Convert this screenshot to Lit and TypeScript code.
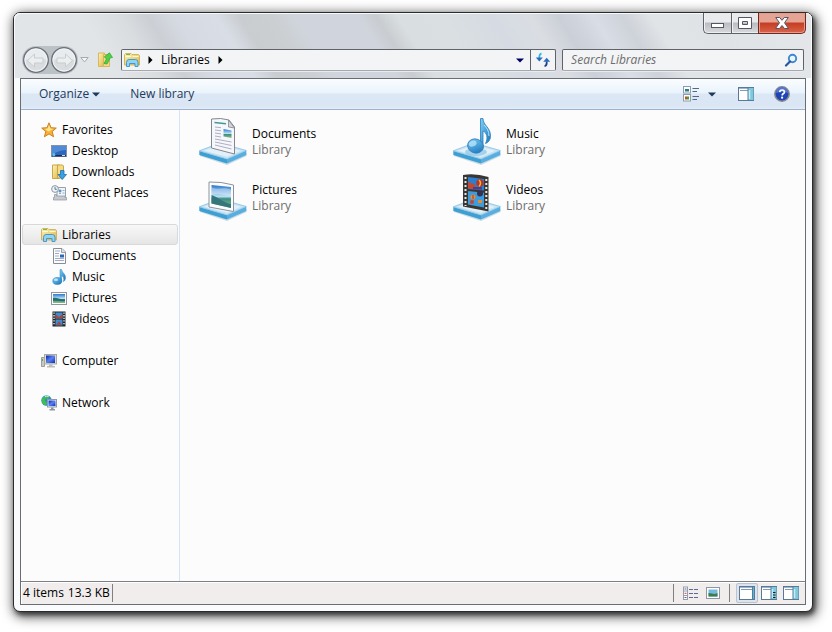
import { LitElement, html, css, svg } from "lit";
import { customElement } from "lit/decorators.js";

const box = (n: number, body: unknown) =>
  html`<svg width=${n} height=${n} viewBox="0 0 ${n} ${n}" aria-hidden="true">${body}</svg>`;

/* Blue shelf on which every large library icon stands. */
const shelf = svg`
  <path d="M1 39 28 48 47.500 39 47.500 36 28 44 1 34z" fill="#a9c4d6" opacity=".6"/>
  <path d="M.3 34v4L28 46.500V42z" fill="#3f9fd2"/>
  <path d="M28 42v4.500L47.300 38v-4.500z" fill="#58aedf"/>
  <path d="M.3 33.800 21 26l26.300 7.500L28 42z" fill="#c6e2f3" stroke="#84c2e6" stroke-width=".8"/>
  <path d="M5 33.800 21 28l21 5.700L28 39.700z" fill="#e4f0f8"/>`;

const gradients = svg`
  <defs>
    <linearGradient id="sky" x1="0" y1="0" x2="0" y2="1">
      <stop offset="0" stop-color="#2d78cf"/><stop offset=".5" stop-color="#b9e0f2"/>
      <stop offset=".6" stop-color="#3d8c86"/><stop offset="1" stop-color="#8fc07c"/>
    </linearGradient>
    <linearGradient id="blue" x1="0" y1="0" x2="1" y2="1">
      <stop offset="0" stop-color="#7fd0f7"/><stop offset="1" stop-color="#1470b8"/>
    </linearGradient>
    <linearGradient id="gold" x1="0" y1="0" x2="1" y2="1">
      <stop offset="0" stop-color="#fdf3b4"/><stop offset="1" stop-color="#dfb646"/>
    </linearGradient>
    <linearGradient id="screen" x1="0" y1="0" x2="1" y2="1">
      <stop offset="0" stop-color="#0a1fa8"/><stop offset=".5" stop-color="#5a82f0"/>
      <stop offset="1" stop-color="#0c2bc0"/>
    </linearGradient>
  </defs>`;

const bigDocument = box(48, svg`${gradients}${shelf}
  <path d="M12.500 2 Q22 .5 30 3L35.500 10V37L12.500 31z" fill="#f6f7fb" stroke="#85878f"/>
  <path d="M29.500 3v7l6 1z" fill="#d2d5dd" stroke="#85878f" stroke-width=".8"/>
  <path d="M15.500 5.500 27 6.700" stroke="#3f9a94" stroke-width="1.600"/>
  <path d="M24.500 12 32.500 13.500v7.500L24.500 19.500z" fill="url(#sky)"/>
  <path d="M16 10l6 .7M16 13l6 .8M16 16l6 .9M16 19l6 1M16 22l16.500 3M16 25l16.500 3.500M16 28l16.500 4" stroke="#a5a5be" stroke-width=".9"/>`);

const bigPicture = box(48, svg`${gradients}${shelf}
  <path d="M10 9 Q22 8.500 34.500 12v26.500L10 34z" fill="#fbfcfd" stroke="#8d939b"/>
  <path d="M12.500 12 32 14v21L12.500 30.500z" fill="url(#sky)"/>
  <path d="M12.500 14c5 4 12-1 19.500 3v6c-7 0-13-4-19.500-1z" fill="#fff" opacity=".35"/>
  <path d="M12.500 22c6 2 13 8 19.500 9v4L12.500 30.500z" fill="#35767a"/>`);

const bigMusic = box(48, svg`${gradients}${shelf}
  <ellipse cx="23" cy="35" rx="11" ry="4" fill="#8cc3e2" opacity=".7"/>
  <path d="M27.500 1.500h2.500c0 7 8 9 7.500 18 0 3-2 6-5 7 3-6 1-11-2.500-12.500v17.500H27.500z" fill="url(#blue)" stroke="#2a80bd" stroke-width=".8"/>
  <path d="M31 8c3 3 5 6 5 11" fill="none" stroke="#b9e4fa"/>
  <ellipse cx="22.500" cy="29" rx="8" ry="7" transform="rotate(20 22.500 29)" fill="url(#blue)" stroke="#2a80bd" stroke-width=".8"/>
  <ellipse cx="19.500" cy="26.500" rx="4" ry="2.800" transform="rotate(-20 20 26)" fill="#c6ebfb" opacity=".7"/>`);

const bigVideo = box(48, svg`${gradients}${shelf}
  <path d="M10 2 Q22 0 35.500 4v34.500L10 33.500z" fill="#3a3733"/>
  <path d="M15 4 31 6v11.500L15 16z" fill="#2c7fd0"/>
  <path d="M15 18 31 19.800v14.700L15 31.500z" fill="#3d9be0"/>
  <path d="M15 9 22 11.500v4.800l-7-.7z" fill="#c8482f"/><circle cx="27" cy="10" r="3.700" fill="#b83427"/>
  <path d="M26 7q3 3 0 6.500" fill="none" stroke="#f0b437" stroke-width="1.500"/>
  <path d="M20 14h9v2.500h-9z" fill="#553b80"/>
  <circle cx="27" cy="20.500" r="3" fill="#34324f"/><circle cx="20" cy="24" r="2.500" fill="#f08d25"/><path d="M20 22v4" stroke="#b52f2a"/>
  <circle cx="19" cy="29" r="2" fill="#c54432"/><path d="M25 27h4v3h-4z" fill="#e58e2c"/>
  <path d="M12.500 4v29" stroke="#dfe8ee" stroke-width="2" stroke-dasharray="2 2"/>
  <path d="M33.300 6v31" stroke="#dfe8ee" stroke-width="2" stroke-dasharray="2 2"/>`);

const star = box(16, svg`${gradients}
  <path d="M8 .8 10 5.700l5.300.4-4.100 3.400 1.400 5.300L8 11.900l-4.600 2.900 1.400-5.300L.7 6.100 6 5.700z" fill="#f9b233" stroke="#c9812b" stroke-linejoin="round"/>
  <path d="M8 3 9.300 6.600l3 .4-5 2.500L4 7l2.700-.4z" fill="#ffe78f"/>`);

const desktop = box(16, svg`${gradients}
  <rect x=".5" y="2.500" width="15" height="11" fill="#2b66bf" stroke="#7d93ad"/>
  <path d="M1 3h14v4C9 7 5 10 1 11z" fill="#639ade" opacity=".7"/>
  <path d="M1 12h14v1.500H1z" fill="#1b2d4e"/><circle cx="2.800" cy="11.700" r="1.600" fill="#5cc0e8"/><path d="M11 12.500h3" stroke="#d9e5f2"/>`);

const folder = box(16, svg`${gradients}
  <path d="M1.500 1h7v13.500h-7z" fill="url(#gold)" stroke="#c9a54b"/>
  <path d="M6.500 1h5l1 1v12h-6z" fill="#f5dc83" stroke="#c9a54b"/>
  <path d="M9.500 6.500h3.500v4h2.500L11.200 15.500 7 10.500h2.500z" fill="#38a0e4" stroke="#1b6db0" stroke-width=".8"/>`);

const recent = box(16, svg`${gradients}
  <path d="M6 2.500h8.500v9H6z" fill="#f2f4f6" stroke="#96a1aa"/>
  <path d="M8 5h2v2H8zM8 8.500h2M11.500 5.500h2M11.500 8h2" fill="#3c8bd0" stroke="#6f9cc4" stroke-width=".8"/>
  <circle cx="4" cy="4" r="3.400" fill="#edf3f7" stroke="#8b98a4"/><path d="M4 2v2.300h1.800" fill="none" stroke="#4d5d6c" stroke-width=".8"/>
  <path d="M3.500 9.500v3h-1v2.500h13v-2.500h-1.500v-1.500H5.500v-1.500z" fill="#c6cbd0" stroke="#8c949c" stroke-width=".7"/>`);

const library = box(16, svg`${gradients}
  <path d="M.5 13V2.500L1.500 1.500h5.500l1 1h6.500l1 1V13z" fill="url(#gold)" stroke="#cfb05a" stroke-width=".9"/>
  <path d="M1.500 4.500h5.500M8.500 4.500H14.500" stroke="#fff8d6"/><path d="M2 2.500h4" stroke="#76b84a"/>
  <path d="M2.500 14.500V10.500Q2.500 7.500 5 7.500h6.500q2.500 0 2.500 3v4h-3V11.500H5.500v3z" fill="#8fd4f5" stroke="#3b92c8" stroke-width=".9"/>`);

const doc = box(16, svg`${gradients}
  <path d="M2.500.5H11L14.500 4v11.500h-12z" fill="#fbfbfd" stroke="#8b8d93"/><path d="M10.500.5v4h4" fill="#dcdfe5" stroke="#8b8d93" stroke-width=".8"/>
  <path d="M4 3h5M4 5.500h4M4 8h4M4 10.500h9M4 12.500h9" stroke="#93a3c2" stroke-width=".9"/><path d="M9 6.500h4v3H9z" fill="#2b6ab5"/>`);

const note = box(16, svg`${gradients}
  <path d="M9 .5h1.500C11 4 15 5 14.500 9c-.2 2-1 3-2 3.500.8-3 0-5-2-6v6H9z" fill="url(#blue)" stroke="#2a80bd" stroke-width=".5"/>
  <ellipse cx="6.300" cy="12" rx="4.500" ry="3.500" fill="url(#blue)" stroke="#2a80bd" stroke-width=".6"/><ellipse cx="5" cy="10.800" rx="2" ry="1.200" fill="#b8e6fb"/>`);

const picture = box(16, svg`${gradients}
  <rect x=".5" y="2.500" width="15" height="12" fill="#fff" stroke="#8f969d"/><path d="M2 4h12v9H2z" fill="url(#sky)"/>
  <path d="M2 8c4-1 7 2 12 1v2c-4 1-8-1-12 0z" fill="#276f77"/>`);

const film = box(16, svg`${gradients}
  <path d="M1.500.5h13v15h-13z" fill="#22262b"/><path d="M4.500 1.500h7v6h-7zM4.500 8.500h7v6h-7z" fill="#3c8ed6"/>
  <path d="M4.500 3 8 6l3.500-3v4.500h-7zM5 14l3-4 3 4z" fill="#a64a3c"/>
  <path d="M3 1.500v13M13 1.500v13" stroke="#e2eaf0" stroke-width="1.400" stroke-dasharray="1.300 1.300"/>`);

const computer = box(16, svg`${gradients}
  <path d="M.5 4.500h3v9h-3z" fill="#c9c9c4" stroke="#8b8b86" stroke-width=".8"/><path d="M1.500 6v2" stroke="#55b13c"/>
  <rect x="3.500" y="1.500" width="12" height="9.500" fill="#dcdcd7" stroke="#a9a9a2"/><rect x="5" y="2.500" width="9" height="7.500" fill="url(#screen)"/>
  <path d="M8 11.500h3.500v1.500H14v1.500H6V13h2z" fill="#bdbdb8"/>`);

const network = box(16, svg`${gradients}
  <circle cx="5.500" cy="5.500" r="5.200" fill="#2f86dc"/><path d="M1 3.500c2-3 6-3 8-2L7 4 4.500 3.500 4 6l2 2-1 2.500C2 10 0 7 1 3.500z" fill="#3fc04a"/>
  <path d="M4 1.500q2-.8 3.500 0" stroke="#d6f2ff" fill="none"/>
  <rect x="6.500" y="4.500" width="9" height="7.500" fill="#eef2f6" stroke="#8f9aa8"/><rect x="7.500" y="5.500" width="7" height="5.500" fill="url(#screen)"/>
  <path d="M10 12.500h2.500V14H14v1.500H8.500V14H10z" fill="#8d97a3"/>`);

const upFolder = box(16, svg`${gradients}
  <path d="M1.500 1h6v13.500h-6z" fill="url(#gold)" stroke="#d8b75c"/><path d="M6.500 2.500h6v12h-6z" fill="#f3d98a" stroke="#d8b75c"/>
  <path d="M7 11.500 9.500 7 7.300 4.800 12.500.8 15.500 5.500l-2.200.3L10 12z" fill="#4fd048" stroke="#2da32d" stroke-width=".7" stroke-linejoin="round"/>`);

const roundArrow = (dir: number) => html`<svg width="28" height="28" viewBox="0 0 28 28" aria-hidden="true">
  <circle cx="14" cy="14" r="12.300" fill="#d9dde0" stroke="#69707a" stroke-width="1.300"/>
  <path d="M3 14a11 11 0 0 1 22 0q-11-4-22 0z" fill="#e9ecee"/>
  <circle cx="14" cy="14" r="11" fill="none" stroke="#f3f5f6"/>
  ${dir < 0
    ? svg`<path d="M5.500 14.500 12.500 8v4h8.500v5h-8.500v4z" fill="#eceef0" stroke="#c8cdd1"/>`
    : svg`<path d="M22.500 14.500 15.500 8v4H7v5h8.500v4z" fill="#eceef0" stroke="#c8cdd1"/>`}
</svg>`;

const refresh = box(16, svg`
  <path d="M6.500 1.500Q4 2 4.300 7" fill="none" stroke="#35b5e6" stroke-width="1.800"/><path d="M.8 5.500h7L4.300 9.500z" fill="#2a6dbf"/>
  <path d="M9.500 14.200q2.500-.5 2.200-5" fill="none" stroke="#1d3f8a" stroke-width="1.800"/><path d="M8.200 9.800h7L11.700 5.800z" fill="#2a6dbf"/>`);

const magnifier = box(14, svg`
  <circle cx="8.500" cy="5.500" r="3.700" fill="#e9f5fc" stroke="#3f88d0" stroke-width="1.900"/>
  <path d="M6 8.500 2 12.500" stroke="#2456a6" stroke-width="2.200" stroke-linecap="round"/>`);

const down = html`<svg width="8" height="5" viewBox="0 0 8 5" aria-hidden="true"><path d="M0 .5h8L4 4.500z" fill="currentColor"/></svg>`;
const crumbArrow = html`<svg width="5" height="8" viewBox="0 0 5 8" aria-hidden="true"><path d="M.5 0v8L4.500 4z" fill="#000"/></svg>`;

const viewIcon = box(16, svg`
  <rect x=".5" y=".5" width="7" height="6.500" fill="#fff" stroke="#8f9cad"/><rect x=".5" y="8.500" width="7" height="6.500" fill="#fff" stroke="#8f9cad"/>
  <path d="M2 3h4v2.500H2z" fill="#267e87"/><path d="M2 10.500h2v3H2z" fill="#b85424"/><path d="M4 10.500h2v3H4z" fill="#4f9c33"/>
  <path d="M9.500 2.500H16M9.500 5.500H14M9.500 10.500H16M9.500 13.500H14" stroke="#516785"/>`);

const panel = (fill: boolean, lines = false) => box(16, svg`
  <rect x=".5" y="1.500" width="15" height="13" fill="#fff" stroke="#587999"/>
  <path d="M1 2.500h14" stroke="#9db4ca"/>
  <path d="M2 4.500h8" stroke="#7e9ab8"/>
  ${fill ? svg`<path d="M10 2h5.500v12H10z" fill="#7cc9dd"/><path d="M10 2v12.500" stroke="#587999"/><path d="M11.500 4v9" stroke="#c5ecf5" stroke-width="1.500"/>`
    : svg`<path d="M2 4.500h11" stroke="#7e9ab8"/><path d="M13.500 2v12" stroke="#587999"/><path d="M14.500 2v12" stroke="#5fb6d3"/>`}
  ${lines ? svg`<path d="M12 7.500h2.500M12 10h2.500M12 12.500h2.500" stroke="#101c24" stroke-width="1.200"/>` : ""}`);

const help = html`<svg width="16" height="16" viewBox="0 0 16 16" aria-hidden="true">
  <circle cx="8" cy="8" r="7.200" fill="#1f44b4" stroke="#84888f" stroke-width="1.500"/>
  <path d="M2 7a6 6 0 0 1 12 0q-6-2-12 0z" fill="#5474d0"/>
  <path d="M5.700 6.200q.2-2.200 2.400-2.200t2.300 1.900q0 1.200-1.300 1.900-.9.600-.9 1.600" fill="none" stroke="#fff" stroke-width="1.700"/>
  <circle cx="8.100" cy="11.700" r="1.100" fill="#fff"/></svg>`;

const listIcon = box(16, svg`
  <rect x=".5" y="2" width="4" height="12.500" fill="#fff" stroke="#9a9da6"/>
  <path d="M.5 6H4.500M.5 10.500H4.500" stroke="#9a9da6"/><path d="M1.500 4h2" stroke="#3d68bb"/><path d="M1.500 8.300h2" stroke="#c03c34"/><path d="M1.500 12.500h2" stroke="#3d68bb"/>
  <path d="M6 4.500h4M11 4.500h4M6 8.500h4M11 8.500h4M6 12.500h4M11 12.500h4" stroke="#5b6a96"/>`);

const tree = [
  { name: "Favorites", icon: star, items: [["Desktop", desktop], ["Downloads", folder], ["Recent Places", recent]] },
  { name: "Libraries", icon: library, selected: true, items: [["Documents", doc], ["Music", note], ["Pictures", picture], ["Videos", film]] },
  { name: "Computer", icon: computer, items: [] },
  { name: "Network", icon: network, items: [] },
] as { name: string; icon: unknown; selected?: boolean; items: [string, unknown][] }[];

const libraries = [["Documents", bigDocument], ["Music", bigMusic], ["Pictures", bigPicture], ["Videos", bigVideo]] as [string, unknown][];

@customElement("app-root")
export class AppRoot extends LitElement {
  static styles = css`
    :host { display: flex; min-height: 100vh; box-sizing: border-box; padding: 12px 19px 20px 13px; background: #fff;
      font: 12px/16px "Open Sans", "Noto Sans", sans-serif; color: #000; }
    * { box-sizing: border-box; }
    svg { display: block; flex: none; }
    button, input { font: inherit; color: inherit; background: none; border: 0; padding: 0; margin: 0; }
    button { display: flex; align-items: center; justify-content: center; }
    a { color: inherit; text-decoration: none; }
    .window { flex: 1; min-width: 0; display: flex; flex-direction: column; border: 1px solid #2b2b2b; border-radius: 7px;
      background: #fafbfc; box-shadow: 2px 3px 4px rgba(0,0,0,.5), 2px 3px 12px 2px rgba(0,0,0,.65); padding-bottom: 6px; }
    .title { border-radius: 6px 6px 0 0; box-shadow: inset 1px 1px 0 #f8f9fa, inset -1px 0 0 #f8f9fa; padding-bottom: 4px;
      background: linear-gradient(58deg, #e2e5e8 0, #e2e5e8 90px, #d9dde0 123px, #ccd0d5 146px, #d6dae2 170px, #d9dde5 204px, #d0d4da 216px,
        #c9cdd0 224px, #cbcfd2 250px, #d0d5dd 272px, #d0d4dc 325px, #c9cdd1 340px, #d9dee0 358px, #dadfe2 395px, #d6dbe3 437px, #dadee3 471px,
        #cbcfd7 494px, #d0d4dc 508px, #d9dde5 524px, #ced2d9 548px, #e0e4e7 573px, #dfe3e6 620px, #e4e6ea 700px); }
    .caption { display: flex; justify-content: flex-end; padding-right: 6px; }
    .cap { height: 21px; width: 28px; border: 1px solid #5e6268; border-top: 0; border-right: 0; box-shadow: inset 1px 0 #f0f1f2, inset 0 -1px #eceef0;
      background: linear-gradient(#e9eaec 0 9px, #b9bcc1 10px, #d8dadd); }
    .cap.min { border-radius: 0 0 0 5px; }
    .cap.max { width: 27px; }
    .cap.close { width: 48px; border-right: 1px solid #6e2a22; border-color: #6e2a22; border-radius: 0 0 5px 0; box-shadow: inset 0 0 0 1px #eb9a88;
      background: linear-gradient(#e6a594 0 9px, #c53c22 10px, #d9644b); }
    .nav { display: flex; align-items: center; height: 28px; margin-top: 12px; padding: 0 8px; }
    .travel { display: flex; background: #bcc1c6; border-radius: 14px; margin-right: 2px; }
    .recent { width: 9px; }
    .up { margin: 0 8px; }
    .field { height: 22px; min-width: 0; display: flex; align-items: center; border: 1px solid #5f6368; border-bottom-color: #a6a9ad;
      border-radius: 2px; background: #f3f4f5; box-shadow: 0 1px #e9ebee; }
    .address { flex: 19 1 0; gap: 8px; padding-left: 2px; margin-right: 6px; }
    .drop { margin-left: auto; width: 20px; height: 20px; color: #000060; margin-right: -8px; }
    .refresh { width: 25px; height: 20px; border-left: 1px solid #5f6368; }
    .search { flex: 10 1 0; padding: 0 5px 0 8px; }
    .search input { flex: 1; min-width: 0; outline: 0; }
    .search input::placeholder { color: #6d6d6d; font-style: italic; opacity: 1; }
    .client { flex: 1; display: flex; flex-direction: column; margin: 0 6px; border: 1px solid #6a6e73; background: #fcfcfc; }
    .tools { display: flex; align-items: center; height: 31px; padding: 0 15px 0 18px; color: #1e395b; border-bottom: 1px solid #a0b3cc;
      background: linear-gradient(#fbfdff 0, #e9f3fc 14px, #dce7f5 15px, #dae6f4 27px, #e4edf8); }
    .organize { gap: 3px; margin-right: 30px; }
    .view { margin-left: auto; gap: 9px; margin-right: 22px; }
    .preview { margin-right: 20px; }
    .body { flex: 1; display: flex; }
    .side { width: 159px; flex: none; border-right: 1px solid #d6e5f5; padding: 9px 1px 0 1px; }
    .group { margin-bottom: 21px; }
    .row { display: flex; align-items: center; gap: 5px; height: 21px; padding-left: 18px; border: 1px solid transparent; border-radius: 3px; }
    .child { padding-left: 28px; }
    .selected { border-color: #d9d9d9; background: linear-gradient(#f8f8f8, #e5e5e5); }
    .main { flex: 1; display: grid; grid-template-columns: repeat(auto-fill, 246px); grid-auto-rows: 48px; gap: 8px; padding: 7px 19px; align-content: start; }
    .tile { display: flex; align-items: center; gap: 5px; }
    .label { padding-top: 2px; }
    .kind { color: #6d6d6d; }
    .status { display: flex; align-items: center; height: 23px; border-top: 1px solid #7d8084; background: #f0edec; box-shadow: inset 1px 1px #fff;
      padding: 0 3px 0 2px; }
    .count { display: flex; gap: 4px; }
    .rule { width: 1px; height: 18px; background: #808080; margin-left: 2px; }
    .rule.first { margin-left: auto; }
    .modes { display: flex; align-items: center; gap: 7px; margin-left: 9px; margin-right: 6px; }
    .panes { display: flex; align-items: center; margin-left: 6px; }
    .pane { width: 22px; height: 20px; }
    .on { border: 1px solid #b9c3d3; border-radius: 2px; background: #dfe3ec; }
  `;

  render() {
    return html`
      <div class="window">
        <header class="title">
          <div class="caption">
            <button class="cap min" aria-label="Minimize"><svg width="14" height="12" viewBox="0 0 14 12"><rect x=".5" y="6.500" width="12" height="4" fill="#fff" stroke="#535666"/></svg></button>
            <button class="cap max" aria-label="Maximize"><svg width="14" height="12" viewBox="0 0 14 12"><path d="M.5.5h13v11H.5zM4.500 4.500v3h5v-3z" fill="#fff" fill-rule="evenodd" stroke="#535666"/></svg></button>
            <button class="cap close" aria-label="Close"><svg width="14" height="12" viewBox="0 0 14 12"><path d="M.7.5h4L7 3.300 9.300.5h4L9.500 5.800l4 5.700h-4L7 8.500l-2.500 3h-4l4-5.700z" fill="#fff" stroke="#535666"/></svg></button>
          </div>
          <nav class="nav" aria-label="Location">
            <div class="travel">
              <button aria-label="Back">${roundArrow(-1)}</button>
              <button aria-label="Forward">${roundArrow(1)}</button>
            </div>
            <button class="recent" aria-label="Recent pages"><svg width="9" height="6" viewBox="0 0 9 6"><path d="M.8.5h7.400L4.500 5z" fill="#f2f4f5" stroke="#a4abb2"/></svg></button>
            <button class="up" aria-label="Up">${upFolder}</button>
            <div class="field address">
              ${library}${crumbArrow}<button>Libraries</button>${crumbArrow}
              <button class="drop" aria-label="Previous locations">${down}</button>
              <button class="refresh" aria-label="Refresh">${refresh}</button>
            </div>
            <div class="field search">
              <input type="search" placeholder="Search Libraries" aria-label="Search Libraries" />
              <button aria-label="Search">${magnifier}</button>
            </div>
          </nav>
        </header>
        <div class="client">
          <div class="tools">
            <button class="organize">Organize ${down}</button>
            <button>New library</button>
            <button class="view" aria-label="Change view">${viewIcon}${down}</button>
            <button class="preview" aria-label="Preview pane">${panel(true)}</button>
            <button aria-label="Help">${help}</button>
          </div>
          <div class="body">
            <nav class="side" aria-label="Folders">
              ${tree.map((g) => html`<div class="group">
                <a class="row ${g.selected ? "selected" : ""}" href="#">${g.icon}<span>${g.name}</span></a>
                ${g.items.map(([name, icon]) => html`<a class="row child" href="#">${icon}<span>${name}</span></a>`)}
              </div>`)}
            </nav>
            <main class="main">
              ${libraries.map(([name, icon]) => html`<a class="tile" href="#">${icon}
                <div class="label"><div>${name}</div><div class="kind">Library</div></div></a>`)}
            </main>
          </div>
          <footer class="status">
            <div class="count"><span>4 items</span><span>13.3 KB</span></div>
            <div class="rule"></div>
            <div class="rule first"></div>
            <div class="modes">
              <button aria-label="Details">${listIcon}</button>
              <button aria-label="Large icons"><svg width="15" height="14" viewBox="0 0 15 14"><rect x=".5" y="1.500" width="13" height="11" fill="#fff" stroke="#8e97a3"/><path d="M2.500 3.500h9v7h-9z" fill="#74b9de"/><path d="M2.500 7c4 0 5 2 9 0v3.500h-9z" fill="#3d7c4c"/></svg></button>
            </div>
            <div class="rule"></div>
            <div class="panes">
              <button class="pane on" aria-label="No pane">${panel(false)}</button>
              <button class="pane" aria-label="Details pane">${panel(true, true)}</button>
              <button class="pane" aria-label="Preview pane">${panel(true)}</button>
            </div>
          </footer>
        </div>
      </div>`;
  }
}
